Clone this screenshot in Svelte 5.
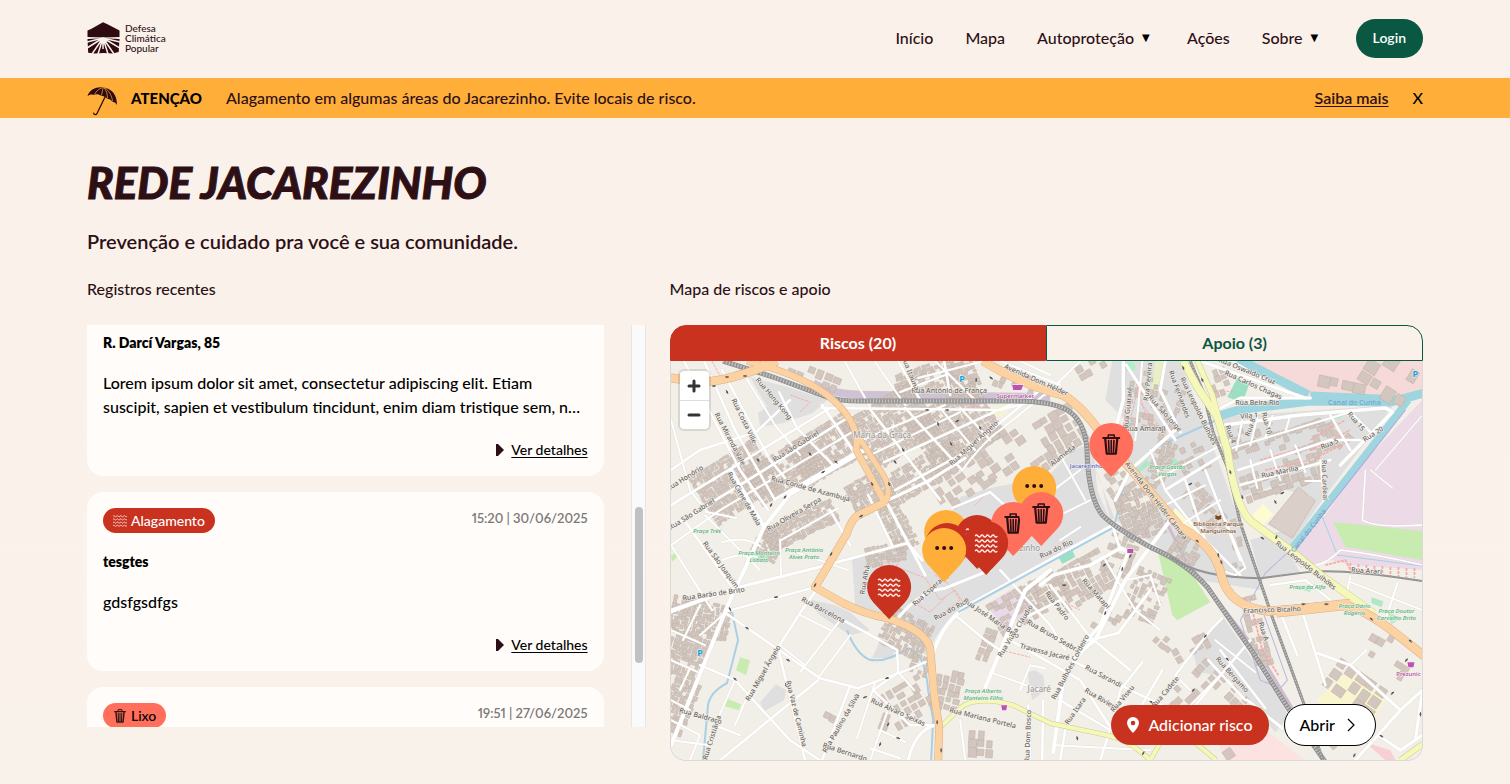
<script>
  import { onMount } from 'svelte';

  const navItems = [
    { label: 'Início', menu: false },
    { label: 'Mapa', menu: false },
    { label: 'Autoproteção', menu: true },
    { label: 'Ações', menu: false },
    { label: 'Sobre', menu: true }
  ];

  const lorem =
    'Lorem ipsum dolor sit amet, consectetur adipiscing elit. Etiam suscipit, sapien et vestibulum tincidunt, enim diam tristique sem, nec porttitor nibh lectus vitae mauris. Donec sit amet justo at magna.';

  const reports = [
    { kind: 'flood', tag: 'Alagamento', time: '10:12 | 02/07/2025', place: 'R. Esperança, 12', text: 'Rua alagada' },
    { kind: 'trash', tag: 'Lixo', time: '09:40 | 01/07/2025', place: 'R. Darcí Vargas, 85', text: lorem },
    { kind: 'flood', tag: 'Alagamento', time: '15:20 | 30/06/2025', place: 'tesgtes', text: 'gdsfgsdfgs' },
    { kind: 'trash', tag: 'Lixo', time: '19:51 | 27/06/2025', place: 'R. do Rio, 40', text: lorem }
  ];
  // The list shows the most recent entry first.
  const entries = [reports[0], reports[1], reports[1], reports[2], reports[3]];

  let list;
  let thumbTop = $state(45);
  let thumbSize = $state(39);

  function syncThumb() {
    thumbTop = (list.scrollTop / list.scrollHeight) * 100;
    thumbSize = (list.clientHeight / list.scrollHeight) * 100;
  }

  onMount(() => {
    list.scrollTop = list.children[3].offsetTop - list.offsetTop - 167;
    syncThumb();
  });

  // Small deterministic generator so that the blocks are always drawn alike.
  let seed = 7;
  const rnd = () => {
    seed = (seed * 16807) % 2147483647;
    return seed / 2147483647;
  };

  // [centre x, centre y, width, height, angle, cell, share of cells drawn]
  const clusters = [
    [890, 428, 84, 60, -32, 4, 0.95], [955, 428, 80, 64, -32, 4, 0.95], [925, 470, 80, 30, -30, 4, 0.9],
    [825, 450, 66, 48, -30, 4, 0.95], [785, 470, 76, 40, -30, 4, 0.9], [735, 482, 76, 56, -32, 4, 0.95],
    [800, 525, 76, 22, -26, 4, 0.95], [870, 492, 44, 34, -28, 4, 0.95], [895, 525, 22, 56, -28, 4, 0.95],
    [767, 545, 26, 26, -60, 4, 0.9], [885, 553, 40, 18, -12, 4, 0.9], [700, 618, 60, 36, 12, 4, 0.95],
    [685, 655, 38, 44, 18, 4, 0.95], [678, 705, 26, 54, 22, 4, 0.95], [905, 632, 46, 38, 28, 4, 0.9],
    [920, 665, 20, 20, 20, 5, 0.8], [905, 700, 44, 34, -30, 8, 0.8], [945, 688, 22, 40, 14, 7, 0.9],
    [925, 378, 64, 26, -20, 4, 0.9], [960, 376, 30, 28, -20, 4, 0.9], [810, 372, 60, 12, 22, 9, 0.5],
    [1015, 380, 40, 20, 24, 6, 0.7], [995, 455, 60, 40, -34, 9, 0.5], [960, 480, 60, 30, -34, 9, 0.65],
    [1060, 430, 44, 40, -30, 9, 0.7], [1045, 465, 40, 20, -34, 8, 0.5], [1137, 515, 36, 50, -20, 5, 0.9],
    [1115, 485, 22, 30, -34, 7, 0.7], [1080, 580, 56, 40, -30, 6, 0.8], [1120, 555, 30, 40, 20, 6, 0.6],
    [1015, 608, 50, 34, -30, 6, 0.75], [1045, 590, 40, 30, -30, 6, 0.7], [1145, 595, 34, 50, 24, 5, 0.6],
    [1110, 620, 30, 30, 28, 6, 0.5], [1188, 545, 30, 26, 30, 5, 0.8], [1205, 505, 46, 20, 50, 6, 0.7],
    [1233, 545, 16, 50, -18, 6, 0.5], [1160, 465, 20, 50, 20, 5, 0.75], [1190, 460, 36, 30, -24, 6, 0.55],
    [1245, 440, 50, 26, -20, 7, 0.6], [1300, 440, 60, 30, -18, 7, 0.5], [1280, 475, 80, 22, -18, 7, 0.65],
    [1330, 430, 40, 20, 40, 7, 0.6], [1140, 400, 26, 60, 8, 6, 0.5], [1165, 410, 20, 50, 20, 6, 0.5],
    [1215, 385, 26, 30, -20, 7, 0.5], [1330, 375, 70, 20, 12, 12, 0.55], [1390, 372, 50, 30, 32, 14, 0.6],
    [1255, 630, 16, 70, -14, 6, 0.7], [1220, 685, 60, 20, 44, 8, 0.6], [1182, 695, 36, 22, -45, 8, 0.5],
    [1355, 688, 60, 34, 35, 12, 0.7], [1225, 745, 70, 20, -35, 14, 0.5], [980, 740, 24, 20, 4, 9, 0.8],
    [875, 710, 20, 20, 20, 9, 0.6], [830, 717, 14, 7, 24, 7, 1], [1400, 670, 16, 14, 30, 8, 0.9],
    [1085, 370, 50, 14, -30, 8, 0.35], [985, 642, 8, 30, 20, 7, 1], [1190, 645, 40, 10, -30, 8, 0.6],
    [1165, 640, 20, 8, 40, 7, 0.9], [1330, 735, 16, 20, -40, 6, 0.8], [1375, 640, 30, 26, 30, 8, 0.3]
  ];

  const buildings = clusters.flatMap(([cx, cy, w, h, angle, cell, share]) => {
    const out = [];
    for (let x = -w / 2; x < w / 2; x += cell) {
      for (let y = -h / 2; y < h / 2; y += cell) {
        if (rnd() > share) continue;
        out.push({
          x: cx + x + rnd(),
          y: cy + y + rnd(),
          w: cell * (0.6 + rnd() * 0.4),
          h: cell * (0.6 + rnd() * 0.45),
          t: `rotate(${angle} ${cx} ${cy})`
        });
      }
    }
    return out;
  });

  const greyAreas = [
    '750,377 787,387 827,400 813,413 783,423 760,427 758,413 767,407',
    '960,497 990,488 1047,477 1073,450 1093,443 1097,490 1112,525 1060,557 960,610 940,630 925,655 905,628 880,612 855,606 852,560 907,543 922,562 935,540',
    '1112,361 1180,361 1225,480 1245,540 1262,590 1200,580 1165,555 1150,530 1175,515 1125,470 1125,420 1105,400',
    '1089,455 1115,520 1160,548 1190,568 1172,520 1150,505 1110,520 1100,480',
    '1217,417 1393,405 1322,500 1287,550 1300,573 1260,577 1250,540 1285,530 1310,495 1270,487 1240,497',
    '1193,653 1223,617 1280,700 1288,716 1275,732 1227,677 1198,672',
    '805,598 835,605 850,612 870,630 850,635 820,615',
    '760,702 776,684 786,690 784,700 764,711',
    '872,658 880,640 895,643 893,658',
    '1027,672 1035,670 1043,675 1045,690 1032,700'
  ];

  const orange = [
    ['M671 378 L703 382 Q735 380 777 361', 8],
    ['M747 361 Q815 378 840 407 Q860 428 856 450 L885 503', 6],
    ['M856 433 L880 470 Q893 488 885 503', 5],
    ['M885 502 L858 515 Q851 520 847 533 L827 567 L815 587 L843 603 Q865 614 887 618 Q925 630 930 648 L934 695 L939 727 L938 762', 7],
    ['M983 361 Q1020 384 1063 395 Q1085 408 1107 443 L1123 460 L1157 500 L1180 527 Q1215 546 1221 575 Q1228 606 1267 611 L1340 605 Q1362 606 1400 637 L1424 656', 8],
    ['M1276 612 L1350 604', 10]
  ];

  const yellow = [
    ['M1183 361 L1197 387 L1217 417 L1227 450 Q1236 512 1253 523 L1290 550 L1323 577 L1373 613', 7],
    ['M1197 361 L1212 395 L1226 445', 5],
    ['M940 727 L960 708 Q975 695 1013 705 L1050 723 L1107 735 Q1130 740 1150 760', 4],
    ['M1150 760 L1168 728 M1186 735 L1216 760', 4],
    ['M1400 760 L1422 744', 5]
  ];

  const streets = [
    ['M684 361 L740 470 L768 510', 2.5], ['M704 361 L735 430 L775 500', 2.5], ['M722 370 L770 460 L785 478', 2.5],
    ['M671 505 L830 408', 2.5], ['M671 470 L700 450 L756 432 L790 400', 2.5], ['M671 527 L735 488 L852 415', 2.5],
    ['M671 545 L720 510 L852 432', 2], ['M671 420 L690 490 L707 512 L736 518', 2], ['M745 376 L775 425 L800 455', 2],
    ['M779 392 L797 428 L833 465', 2.5], ['M731 470 L764 527 L727 607 L671 745', 4], ['M764 527 L790 494 L868 448', 4],
    ['M775 499 L860 450', 2.5], ['M822 405 L880 490 L925 575', 3], ['M822 408 L1000 410 L1030 402', 2.5],
    ['M869 408 L940 500', 2.5], ['M905 408 L962 470', 2.5], ['M884 462 L1020 400', 2.5], ['M895 490 L960 455 L1040 390', 2.5],
    ['M862 440 L945 405', 2], ['M870 455 L960 412', 2], ['M940 408 L975 450 M960 408 L990 440', 2],
    ['M886 501 L930 480 L965 458', 3], ['M845 362 L870 407 M875 362 L905 405', 2], ['M898 361 L920 400 M944 361 L950 395', 2.5],
    ['M918 378 L980 362 M900 392 L945 375 M935 361 L975 400', 2], ['M1000 361 L1060 385 M1020 361 L1050 375', 2],
    ['M671 610 L735 588 L815 568 L907 543 L922 560', 3], ['M727 611 L815 587', 2.5], ['M671 612 L725 592', 2.5],
    ['M671 545 L712 610', 2], ['M684 520 L731 586', 2.5], ['M705 515 L760 570', 2], ['M722 542 Q745 535 760 546 M722 560 Q740 552 757 557', 2],
    ['M780 540 L781 575 M781 540 L838 508', 2], ['M790 550 L848 570', 2], ['M830 510 L850 545 M868 495 L892 545', 2.5],
    ['M816 590 L795 620 M727 614 L820 678 L858 688 L912 668 L925 662', 2.5], ['M775 652 L802 610', 2.5],
    ['M779 652 L805 760', 2.5], ['M700 665 L735 680 L790 740 L820 760', 2.5], ['M735 680 L715 725 L740 735', 2], ['M750 690 L735 725', 2],
    ['M818 680 L720 760', 2.5], ['M818 678 L850 635 M800 672 L840 620', 2], ['M780 645 L805 665 M800 615 L830 630', 2],
    ['M850 685 L822 760', 2.5], ['M875 682 L857 738', 2], ['M843 620 Q880 640 897 650 L898 672 L873 690 L910 725 L938 725', 2.5],
    ['M887 712 L870 760 M880 730 L905 742 M870 748 L900 758', 2], ['M935 725 Q915 730 908 760', 3], ['M898 672 L914 690', 2],
    ['M898 618 Q920 590 945 588 L990 570', 3], ['M931 660 Q940 625 965 607 L1110 527', 4],
    ['M962 470 Q985 440 1000 430 L1060 382', 2], ['M952 508 L990 492 L1010 510 L1040 540', 2.5], ['M1040 500 L1080 470 M1050 520 L1090 500 M1060 540 L1080 527', 2],
    ['M1060 455 L1085 500', 2], ['M955 615 L985 640 L1000 650', 2.5], ['M984 690 L1025 590 L1050 570', 4], ['M1000 650 L1020 620 L1060 600', 2.5],
    ['M1000 570 L1050 625 L1065 650', 2.5], ['M1050 585 L1090 637 L1130 670', 2.5], ['M1010 640 L1080 680 L1112 730', 2.5],
    ['M990 672 L1040 690 M1020 690 L1030 665 L1045 668', 2], ['M1053 752 L1063 680 Q1073 655 1095 640 L1125 580 L1170 520', 4],
    ['M1040 585 L1053 575 L1090 565 L1120 548 L1128 552 L1100 625 L1085 642', 3.5], ['M1112 525 L1120 550', 3],
    ['M1105 560 L1135 610 L1160 630', 2], ['M1125 580 L1150 575 L1160 605', 2], ['M1090 640 L1118 633 L1150 590', 3],
    ['M1075 662 L1130 690 L1185 716', 2.5], ['M1060 700 L1110 730 L1120 690 L1142 662', 2.5], ['M1130 725 L1162 670', 2.5],
    ['M1175 675 L1210 630 L1222 618', 2.5], ['M1175 675 L1190 690', 2], ['M1195 705 L1250 640 M1208 660 L1245 700 M1220 650 L1265 708', 2.5],
    ['M1215 640 L1255 672 M1190 705 L1220 675', 2], ['M1247 700 L1282 728', 3], ['M1055 745 L1150 750', 2],
    ['M1109 732 L1100 760 M1060 760 L1065 730', 2.5], ['M1042 760 L1043 700 M1028 705 L1030 760', 2.5], ['M965 760 L960 720', 2],
    ['M1080 361 L1045 395', 2], ['M1123 361 L1123 400 L1115 430', 3.5], ['M1126 365 L1175 440', 3], ['M1165 361 L1160 390 L1180 432', 3],
    ['M1142 361 L1135 440', 2], ['M1175 430 L1130 470 L1115 500', 3.5], ['M1165 490 L1222 455', 3], ['M1165 490 L1200 535 L1240 575', 2.5],
    ['M1150 450 L1165 490 M1155 480 L1230 440', 2], ['M1185 480 L1205 540 M1205 470 L1240 560', 2.5], ['M1165 505 L1205 485 M1180 525 L1220 500', 2],
    ['M1220 570 L1235 575 L1245 568 L1225 520', 2], ['M1200 361 L1305 398', 3], ['M1215 411 L1240 398 L1310 398', 3], ['M1232 361 L1265 380', 2],
    ['M1225 425 L1300 415 L1385 408 L1392 412 L1340 465', 3.5], ['M1232 448 L1350 412', 2], ['M1238 470 L1330 440 L1360 440', 2.5],
    ['M1240 485 L1330 460', 2.5], ['M1242 420 L1236 450 M1257 417 L1250 445 M1272 416 L1265 438 M1290 415 L1285 432', 2],
    ['M1330 415 L1350 450 M1350 412 L1370 432', 2.5], ['M1270 450 L1280 480 M1295 445 L1305 472 M1250 460 L1257 488', 2],
    ['M1320 460 L1323 495 M1305 481 L1323 481', 2], ['M1365 470 L1362 520 Q1375 528 1422 525', 1.5], ['M1370 470 L1392 488 M1422 415 L1375 470', 1.2],
    ['M1300 565 Q1320 570 1340 550 Q1380 555 1422 565', 1.5], ['M1270 585 L1305 580 L1330 600', 2.5], ['M1350 576 L1345 600 M1350 582 L1422 610', 2],
    ['M1397 583 L1385 620', 2], ['M1280 612 L1297 655 M1302 612 L1325 685', 2.5], ['M1317 653 L1350 665 L1400 710 L1355 760', 3],
    ['M1350 665 L1366 650', 2], ['M1400 710 L1422 690 M1378 735 L1400 750 L1422 735', 3], ['M1422 690 L1415 740', 3],
    ['M683 640 L700 605 M671 630 L705 645 M671 660 L698 672 M680 690 L690 668', 2], ['M671 720 L700 735 M671 740 L710 745 M690 760 L700 735', 2],
    ['M700 635 L728 610 M671 700 L690 710', 2]
  ];

  const rails = [
    ['M723 361 L773 377 L827 397 Q840 401 860 401 L1013 401 Q1055 401 1070 412 Q1087 425 1087 457 Q1089 498 1102 515 Q1115 528 1150 547 Q1185 562 1207 587 L1253 653 L1287 707 L1325 762', 5],
    ['M1190 361 L1203 393 L1213 433 L1227 467 L1240 523 L1257 573 L1273 620 L1307 713 L1323 762', 3],
    ['M1170 557 Q1200 578 1260 578 L1307 572 Q1340 568 1422 581', 2]
  ];

  const labels = [
    ['Rua Hong Kong', 772, 400, 50], ['Rua Costa Ville', 742, 422, 64],
    ['Rua Miranda Vale', 728, 440, 62], ['Rua Honório', 686, 480, -32], ['Rua São Gabriel', 693, 516, -32], ['Rua São Gabriel', 797, 448, -32],
    ['Rua Cirne de Maia', 742, 500, 60], ['Rua São Joaquim', 719, 566, 54], ['Rua Barão de Brito', 714, 596, -8], ['Rua Oliveira Serpa', 795, 516, -30],
    ['Rua Conde de Azambuja', 810, 491, 15], ['Rua Antônio de França', 949, 393, 0], ['Rua Miguel Ângelo', 975, 445, -42], ['Rua Miguel Ângelo', 765, 674, -60],
    ['Rua Itaúna', 908, 374, 68], ['Avenida Dom Hélder', 1035, 382, 24], ['Avenida Dom Hélder Câmara', 1154, 502, 52],
    ['Rua Álvaro Seixas', 897, 714, 24], ['Rua Paulino da Silva', 843, 724, -60], ['Rua Vaz de Caminha', 794, 714, 76], ['Rua Barcelona', 822, 612, 28],
    ['Rua Esperança', 933, 590, -42], ['Rua Alhá', 867, 580, -80], ['Rua do Rio', 1057, 551, -25], ['Rua do Rio', 951, 612, -28], ['Rua José Maria Belo', 990, 620, 34],
    ['Rua Viúva Cláudio', 1017, 632, -58], ['Rua Mariana Portela', 982, 720, 14], ['Rua Bernardo', 844, 754, 18], ['Rua Cristiânia', 714, 738, -72],
    ['Rua Baldraco', 700, 718, 16], ['Rua Bruno Seabra', 1052, 638, 30], ['Travessa Jacaré', 1044, 654, 14], ['Rua Sarandi', 1102, 678, 28],
    ['Rua Riviera', 1100, 701, 30], ['Rua Matapi', 1094, 595, 48], ['Rua Padro', 1055, 607, 52],
    ['Rua Bérgamo', 1230, 676, 48], ['Rua Bulhões Cordeiro', 1072, 668, -62], ['Rua Cadete', 1167, 693, -50], ['Rua Viseu', 1124, 700, -50], ['Rua Isara', 1077, 712, -55],
    ['Rua Amaraji', 1145, 431, 0], ['Rua Guararé', 1130, 408, -84], ['Rua Pereira', 1150, 382, -84], ['Rua Fernandes', 1177, 395, 70],
    ['Rua São Jorge', 1163, 415, 48], ['Rua Leopoldo Bulhões', 1196, 412, 64], ['Rua Leopoldo Bulhões', 1304, 567, 38], ['Rua Oswaldo Cruz', 1246, 373, 22],
    ['Rua Carlos Chagas', 1252, 387, 24], ['Rua Beira Rio', 1257, 405, 0], ['Vila 1', 1249, 418, -4],
    ['Rua 10', 1264, 424, 75], ['Rua 8', 1252, 428, -70], ['Rua 4', 1228, 435, 70], ['Rua 15', 1354, 423, 50], ['Rua 20', 1374, 436, -32], ['Rua 5', 1330, 446, -22],
    ['Rua Marília', 1280, 474, -12], ['Rua Arari', 1366, 573, 4], ['Rua Cardeal', 1322, 480, 88], ['Francisco Bicalho', 1272, 612, -2],
    ['Rua A', 1261, 632, 72], ['Rua Dom Bosco', 1030, 736, -88], ['Alameda', 1064, 457, -38]
  ];

  const parks = [
    ['Praça Três', 707, 533], ['Praça Monteiro', 759, 555], ['Lobato', 759, 562], ['Praça Antônio', 804, 552], ['Alves Prato', 804, 559],
    ['Praça Alberto', 983, 693], ['Monteiro Filho', 983, 700], ['Praça Gastão', 1167, 469], ['Vargas', 1167, 476], ['Praça da Alfa', 1307, 589],
    ['Praça Dário', 1354, 608], ['Rogério', 1354, 615], ['Praça Doutor', 1396, 613], ['Carvalho Brito', 1396, 620]
  ];

  // One-way arrows drawn as short dark ticks.
  const ticks = [
    [714, 386, 0], [727, 377, 0], [745, 376, 0], [727, 392, 60], [810, 454, 50], [836, 462, 40], [823, 472, -30], [785, 497, -50], [771, 505, -60], [758, 460, 50],
    [872, 484, 60], [889, 484, 70], [861, 516, -30], [831, 554, -60], [815, 585, -60], [776, 597, -8], [730, 609, 60], [747, 628, 34], [735, 679, 40],
    [788, 660, 30], [786, 685, 70], [855, 696, -70], [865, 697, -20], [887, 678, -10], [888, 724, -60], [898, 738, 15], [880, 744, -70], [937, 722, 90], [941, 750, 90],
    [1064, 585, 0], [1104, 565, -40], [1122, 569, -80], [1130, 556, -60], [1105, 613, -70], [1190, 484, -30], [1197, 541, 40], [1218, 555, 80], [1221, 562, 70],
    [1230, 472, 70], [1242, 497, 70], [1262, 538, 35], [1330, 583, 35], [1303, 604, 0], [1326, 604, 0], [1371, 619, 40], [1410, 641, 40], [1183, 368, 70],
    [1202, 380, 60], [1282, 493, -30], [1275, 502, 60], [1276, 537, -70], [1193, 690, -50], [1205, 636, -50], [1227, 659, 40], [1059, 690, 90], [1077, 738, 80],
    [1151, 702, 40], [1143, 753, -60], [1406, 660, -50], [1392, 693, -40], [1420, 714, 90], [1381, 736, 30], [1354, 755, -60],
    [927, 410, 0], [947, 410, 0], [938, 424, 70], [951, 444, 60], [976, 380, 90], [991, 378, 40], [895, 462, 50], [903, 450, 60], [957, 421, -30], [980, 428, 60]
  ];

  const pins = [
    ['dots', 924, 510], ['flood', 925, 523], ['dots', 1012, 466], ['flood', 955, 515], ['trash', 991, 502], ['trash', 1019, 492],
    ['flood', 964, 521], ['dots', 922, 528], ['trash', 1089, 423], ['flood', 867, 565]
  ];
</script>

{#snippet waves()}
  {#each [1, 6, 11, 16] as y}
    <path
      d="M0 {y + 1}q1.400-2 2.750 0t2.750 0 2.750 0 2.750 0 2.750 0 2.750 0 2.750 0 2.750 0"
      fill="none"
      stroke="currentColor"
      stroke-width="1.500"
    />
  {/each}
{/snippet}

{#snippet bin()}
  <g fill="none" stroke="currentColor" stroke-linecap="round" stroke-linejoin="round">
    <path d="M1 4h16" stroke-width="2" />
    <path d="M6 3.500V1h6v2.500" stroke-width="1.500" />
    <path d="M3 5l1.400 14.500h9.200l1.400-14.500" stroke-width="2.200" />
    <path d="M6.300 6.500l.5 11.500M9 6.500v11.500M11.700 6.500l-.5 11.500" stroke-width="1.600" />
  </g>
{/snippet}

<div class="page">
  <header class="topbar">
    <a class="brand" href="#inicio">
      <svg width="33" height="32" viewBox="0 0 33 32" aria-hidden="true">
        <path d="M.5 8.500L4 7 16 .3 20 2l12.500 6.500v6.500L17 15.500 .5 15z" fill="#2d0b10" />
        <path d="M.5 17l15.500-.8 16.500.8-.8 13-6 1.500-9-.5-9 .5-6.500-.7z" fill="#2d0b10" />
        <g stroke="#fbf1eb" stroke-width="1.500" fill="none">
          <path d="M16 16L0 20M16 16L0 26M16 16L5 32M16 16l-5 16M16 16v11M16 16l5 16M16 16l11 16M16 16l17 10M16 16l17 4" />
        </g>
        <path d="M11 17.500h11l-5.500 5z" fill="#fbf1eb" />
      </svg>
      <span>Defesa<br />Climática<br />Popular</span>
    </a>
    <nav>
      {#each navItems as item}
        {#if item.menu}
          <button class="nav-item" type="button">{item.label}<span class="caret" aria-hidden="true">▼</span></button>
        {:else}
          <a class="nav-item" href="#{item.label}">{item.label}</a>
        {/if}
      {/each}
      <button class="login" type="button">Login</button>
    </nav>
  </header>

  <div class="alert" role="status">
    <svg width="32" height="32" viewBox="0 0 32 32" aria-hidden="true">
      <path
        d="M.5 11C3 4 10 1.500 16 2.500c8 1 14 6 14 17.500-1.500-2.500-3-3.500-4.500-3-1-2-3-3.500-5-3-1.500-2-4-3.500-6-3C12 9 9 8.500 7.500 10 5 9 2.500 9.500.5 11z"
        fill="#2d0b10"
      />
      <path d="M18 12L10 28.500c-.8 1.600-3 1.500-3.300-.3" fill="none" stroke="#2d0b10" stroke-width="1.300" stroke-linecap="round" />
      <path
        d="M7.500 10C9 6 12 3.500 15.500 2.700M14.500 10.500C15 7 16 4 16.300 2.700M20.500 13.500c0-5-1.500-8.500-3.500-10.700M25.500 16.500C25 10 21 5 18 3"
        fill="none"
        stroke="#ffae3a"
        stroke-width=".7"
      />
    </svg>
    <strong>ATENÇÃO</strong>
    <p>Alagamento em algumas áreas do Jacarezinho. Evite locais de risco.</p>
    <a href="#saiba-mais">Saiba mais</a>
    <button type="button" aria-label="Fechar aviso">X</button>
  </div>

  <main>
    <h1>REDE JACAREZINHO</h1>
    <p class="lead">Prevenção e cuidado pra você e sua comunidade.</p>

    <div class="columns">
      <section>
        <h2>Registros recentes</h2>
        <div class="feed">
          <div class="list" bind:this={list} onscroll={syncThumb}>
            {#each entries as entry}
              <article>
                <div class="meta">
                  <span class="tag {entry.kind}">
                    {#if entry.kind === 'flood'}
                      <svg width="14" height="12" viewBox="0 0 22 19" opacity=".8" aria-hidden="true">{@render waves()}</svg>
                    {:else}
                      <svg width="14" height="14" viewBox="0 0 18 21" opacity=".8" aria-hidden="true">{@render bin()}</svg>
                    {/if}
                    {entry.tag}
                  </span>
                  <time>{entry.time}</time>
                </div>
                <h3>{entry.place}</h3>
                <p>{entry.text}</p>
                <div class="more">
                  <svg width="8" height="12" viewBox="0 0 8 12" aria-hidden="true"><path d="M0 0h2l6 6-6 6H0z" fill="#2d1015" /></svg>
                  <a href="#detalhes">Ver detalhes</a>
                </div>
              </article>
            {/each}
          </div>
          <div class="track" aria-hidden="true">
            <div class="thumb" style="top: {thumbTop}%; height: {thumbSize}%"></div>
          </div>
        </div>
      </section>

      <section>
        <h2>Mapa de riscos e apoio</h2>
        <div class="tabs" role="tablist">
          <button type="button" role="tab" aria-selected="true">Riscos (20)</button>
          <button type="button" role="tab" aria-selected="false">Apoio (3)</button>
        </div>
        <div class="map">
          <svg class="canvas" viewBox="671 361 751 399" preserveAspectRatio="xMinYMin slice" aria-hidden="true">
            <rect x="671" y="361" width="751" height="399" fill="#f2efe9" />
            {#each greyAreas as points}
              <polygon {points} fill="#dfdfdf" />
            {/each}
            <polygon points="1250,361 1422,361 1422,390 1400,397 1310,396" fill="#f6d9d9" />
            <polygon points="1422,400 1422,570 1350,565 1330,560 1300,568 1287,552 1325,515 1360,465" fill="#ecdbe7" />
            <polygon points="1218,745 1260,726 1305,760 1224,760" fill="#fde2e2" />
            <polygon points="1365,742 1390,750 1395,760 1385,760" fill="#f6d0d4" />
            <polygon points="985,605 1010,590 1025,598 1030,612 1005,627" fill="#ead9e8" />
            <polygon points="1333,522 1422,531 1422,560 1345,547" fill="#c8ebb0" />
            <polygon points="1158,553 1187,567 1210,602 1177,620 1172,615" fill="#c8ebb0" />
            <polygon points="740,657 750,660 746,675 736,670" fill="#c8ebb0" />
            <polygon points="726,698 741,704 739,710 725,706" fill="#c8ebb0" />
            <polygon points="671,556 677,551 678,556 672,562" fill="#c8ebb0" />
            <polygon points="1175,508 1206,540 1202,545 1172,512" fill="#fbf8d4" />
            <polygon points="1252,515 1263,504 1273,514 1260,528" fill="#fdfbd0" />
            <polygon points="1316,700 1348,670 1385,700 1360,740" fill="#f8f5cf" />
            <polygon points="1155,361 1163,361 1157,395 1150,393" fill="#eaf0c4" />
            <polygon points="978,410 1005,405 1007,412 995,418 992,412" fill="#f6f6cc" />
            <polygon points="1237,378 1249,384 1242,403 1227,397" fill="#9ce0c4" />
            <polygon points="1058,557 1072,550 1075,557 1062,564" fill="#9ce0c4" />
            <circle cx="1130" cy="367" r="5" fill="#aef0c8" />
            <path d="M1167 465l8-7 6 8-8 5zM1136 470l10-10 4 4-10 8zM1371 597l12 4-2 6-10-4zM752 552l18 2-4 9-14-3z" fill="#aee8c8" />
            <path d="M1295 587l20-3-6 8zM1385 610l16 8-10 6zM1335 417l8-2-4 5z" fill="#b4eecb" />
            <polygon points="1298,487 1315,501 1292,538 1268,524" fill="#dbd0c9" stroke="#c4b6ab" stroke-width=".7" />

            <g fill="none" stroke="#9fd5df">
              <path d="M1238 359 L1308 395" stroke-width="9" />
              <path d="M1216 418 Q1230 410 1260 407 L1310 401 L1390 402 L1424 393" stroke-width="9" />
              <path d="M1310 396 L1400 400" stroke-width="9" />
              <path d="M1408 400 L1320 512 L1290 550" stroke-width="7" />
            </g>
            <g fill="none" stroke="#a9cfe6" stroke-width="2">
              <path d="M847 630 Q855 652 868 659 Q885 664 908 648 Q925 652 928 690 L933 720 L931 760" />
              <path d="M732 612 L738 640 L727 683 Q710 692 708 705 L703 760" />
              <path d="M1216 420 L1150 450 L1125 480 L1115 522" />
              <path d="M1320 512 L1337 555 L1422 566" stroke-width="1" />
              <path d="M1290 550 L1265 573 L1240 620 L1260 680 L1280 688 L1287 680 L1262 610" stroke="#b9b6e0" stroke-width="1" />
              <path d="M1405 410 L1290 556" stroke="#a9a2dd" stroke-width="1" />
              <path d="M1197 375 L1222 435" stroke="#a9a2dd" stroke-width="1" />
            </g>
            <path d="M813 383 Q830 395 870 395 L1050 397" fill="none" stroke="#cfc2d2" stroke-width="8" />
            <path d="M1165 520 L1185 560 L1260 655 L1320 755" fill="none" stroke="#cdbccd" stroke-width="3" />

            <g fill="#d2c6be" stroke="#bdb0a7" stroke-width=".5">
              {#each buildings as b}
                <rect x={b.x} y={b.y} width={b.w} height={b.h} transform={b.t} />
              {/each}
            </g>
            <g fill="none" stroke="#f7a9a6" stroke-width=".9" stroke-dasharray="3 1">
              <path d="M880 560 L905 570 L925 578 L940 600 L955 590 L965 605 M910 600 L930 612 L945 598 M935 575 L950 585 L960 600 L935 620 M900 560 L890 575" />
              <path d="M712 361 L720 376 M790 395 L810 402 L800 412 M735 372 L760 362 M970 395 L985 392 M972 408 L985 402 M1005 651 L1030 657" />
              <path d="M1128 390 L1120 450 M1135 380 L1150 430 M1142 370 L1130 420 M1138 400 L1170 440 M1160 430 L1180 425 M1210 390 L1235 392" />
              <path d="M1260 460 L1330 440 M1265 470 L1310 460 M1310 440 L1345 420 M1310 450 L1350 430 M1315 458 L1355 438" stroke-width="1.500" />
              <path d="M1325 565 L1345 560 L1350 570 M1350 563 v10 M1358 564 v9 M1366 565 v10 M1374 566 v9 M1382 566 v10 M1390 567 v10 M1398 567 v10 M1406 568 v10 M1414 568 v10 M1252 610 L1262 650 L1278 675" stroke-width="1.800" />
              <path d="M975 505 L985 495 M1060 600 L1080 610" />
            </g>

            <g fill="none" stroke-linejoin="round" stroke-linecap="round">
              {#each streets as [d, w]}
                <path {d} stroke="#d8d3cc" stroke-width={w + 0.8} opacity=".5" />
              {/each}
              {#each streets as [d, w]}
                <path {d} stroke="#ffffff" stroke-width={w} />
              {/each}
            </g>
            <path d="M958 612 L1112 528" fill="none" stroke="#a9cfe6" stroke-width="2" />
            <g fill="none">
              {#each rails as [d, w]}
                <path {d} stroke="#8f8f8f" stroke-width={w} />
                <path {d} stroke="#c0c0c0" stroke-width={w - 1.6} stroke-dasharray="1.500 1.500" />
              {/each}
            </g>
            <g fill="none" stroke-linejoin="round">
              {#each yellow as [d, w]}
                <path {d} stroke="#c9cb92" stroke-width={w + 1} />
              {/each}
              {#each yellow as [d, w]}
                <path {d} stroke="#f5f8b9" stroke-width={w} />
              {/each}
              {#each orange as [d, w]}
                <path {d} stroke="#d9b083" stroke-width={w + 1} />
              {/each}
              {#each orange as [d, w]}
                <path {d} stroke="#fcd2a2" stroke-width={w} />
              {/each}
            </g>
            <g stroke="#555" stroke-width="1.100">
              {#each ticks as [x, y, a]}
                <path d="M{x - 2} {y}h4m-2-1v2" transform="rotate({a} {x} {y})" />
              {/each}
            </g>

            <g class="names">
              {#each labels as [name, x, y, a]}
                <text {x} {y} transform="rotate({a} {x} {y})">{name}</text>
              {/each}
              <g class="park">
                {#each parks as [name, x, y]}
                  <text {x} {y}>{name}</text>
                {/each}
              </g>
              <g class="district">
                <text x="882" y="438">Maria da Graça</text>
                <text x="1018" y="551">Jacarezinho</text>
                <text x="1039" y="692">Jacaré</text>
              </g>
              <g class="water">
                <text x="1354" y="405">Canal do Cunha</text>
                <text x="1310" y="532" transform="rotate(-52 1310 532)">Canal do Cunha</text>
              </g>
              <g class="shop">
                <text x="1015" y="398">Supermarket</text>
                <text x="1408" y="676">Prezunic</text>
              </g>
              <g class="culture">
                <text x="1218" y="526">Biblioteca Parque</text>
                <text x="1218" y="533">Manguinhos</text>
                <path d="M1215 515l3 1 3-1v4l-3 1-3-1z" />
              </g>
              <g class="station"><text x="1086" y="468">Jacarezinho</text></g>
              <g class="parking">
                <text x="962" y="382">P</text>
                <text x="1415" y="377">P</text>
                <text x="700" y="656">P</text>
              </g>
              <path d="M1012 385h11l-2 5h-8zM1001 705h6l-1 5h-4zM1407 662h7l-1 5h-5zM1127 549h6v4h-6z" fill="#bf4fb4" />
            </g>

            {#each pins as [kind, x, y]}
              <g class="pin {kind}" transform="translate({x} {y})">
                <path d="M22 54L6.500 37.500A22 22 0 1 1 37.500 37.500z" fill="currentColor" />
                {#if kind === 'flood'}
                  <g transform="translate(11 13)" color="#ffe9e4">{@render waves()}</g>
                {:else if kind === 'trash'}
                  <g transform="translate(13 11)" color="#2d1015">{@render bin()}</g>
                {:else}
                  <g fill="#2d1015">
                    <circle cx="15" cy="20" r="2" />
                    <circle cx="22" cy="20" r="2" />
                    <circle cx="29" cy="20" r="2" />
                  </g>
                {/if}
              </g>
            {/each}
          </svg>

          <div class="zoom">
            <button type="button" aria-label="Aproximar">
              <svg width="14" height="14" viewBox="0 0 14 14" aria-hidden="true"><path d="M7 2v10M2 7h10" /></svg>
            </button>
            <button type="button" aria-label="Afastar">
              <svg width="14" height="14" viewBox="0 0 14 14" aria-hidden="true"><path d="M2 7h10" /></svg>
            </button>
          </div>

          <div class="actions">
            <button class="add" type="button">
              <svg width="12" height="16" viewBox="0 0 12 16" aria-hidden="true">
                <path fill-rule="evenodd" d="M6 0a6 6 0 0 1 6 6c0 4-6 10-6 10S0 10 0 6a6 6 0 0 1 6-6zm0 3.700a2.300 2.300 0 1 0 0 4.600 2.300 2.300 0 0 0 0-4.600z" fill="currentColor" />
              </svg>
              Adicionar risco
            </button>
            <button class="open" type="button">
              Abrir
              <svg width="8" height="14" viewBox="0 0 8 14" aria-hidden="true"><path d="M1 1l6 6-6 6" fill="none" stroke="currentColor" stroke-width="1.200" /></svg>
            </button>
          </div>
        </div>
      </section>
    </div>
  </main>
</div>

<style>
  :global(body) {
    margin: 0;
  }
  .page {
    min-height: 100vh;
    box-sizing: border-box;
    padding-bottom: 23px;
    background: linear-gradient(#fbf1eb 40%, #f9f2ea);
    color: #2d1015;
    font-family: Lato, 'Open Sans', sans-serif;
    font-size: 16px;
    font-weight: 500;
    line-height: 24px;
  }
  button {
    margin: 0;
    padding: 0;
    border: 0;
    background: none;
    font: inherit;
    color: inherit;
    cursor: pointer;
  }
  h1, h2, h3, p {
    margin: 0;
  }
  .topbar, .alert, main {
    padding-inline: 87px;
  }
  .topbar {
    display: flex;
    align-items: center;
    justify-content: space-between;
    box-sizing: border-box;
    height: 78px;
    padding-bottom: 2px;
  }
  .brand {
    display: flex;
    align-items: center;
    gap: 5px;
    color: inherit;
    font-size: 10px;
    line-height: 10px;
    text-decoration: none;
  }
  nav {
    display: flex;
    align-items: center;
    gap: 32px;
  }
  .nav-item {
    display: flex;
    align-items: center;
    gap: 8px;
    color: inherit;
    text-decoration: none;
  }
  .caret {
    width: 13px;
    color: #000;
    font-family: 'DejaVu Sans', sans-serif;
    font-size: 10px;
    text-align: left;
  }
  .login {
    height: 39px;
    padding: 0 17px;
    border-radius: 20px;
    background: #0a5842;
    color: #fff;
    font-size: 14px;
    font-weight: 600;
  }
  .alert {
    display: flex;
    align-items: center;
    height: 40px;
    background: #ffae3a;
  }
  .alert svg {
    margin-top: 6px;
    margin-right: 12px;
  }
  .alert strong {
    margin-right: 24px;
    color: #000;
    font-size: 15px;
    font-weight: 900;
  }
  .alert p {
    flex: 1;
  }
  .alert a {
    margin-right: 24px;
    color: inherit;
    font-weight: 600;
    text-underline-offset: 2px;
  }
  .alert button {
    color: #000;
  }
  main {
    padding-top: 32px;
  }
  h1 {
    font-size: 44px;
    font-style: italic;
    font-weight: 900;
    line-height: 64px;
    -webkit-text-stroke: 1px currentColor;
  }
  .lead {
    margin-top: 12px;
    font-size: 20px;
    font-weight: 600;
    line-height: 30px;
  }
  .columns {
    display: grid;
    grid-template-columns: minmax(0, 43fr) minmax(0, 58fr);
    gap: 24px;
    margin-top: 21px;
  }
  h2 {
    margin-bottom: 24px;
    font-size: 16px;
    font-weight: 500;
  }
  .feed {
    display: flex;
    gap: 27px;
    height: 402px;
  }
  .list {
    display: flex;
    flex: 1;
    flex-direction: column;
    gap: 16px;
    overflow-y: auto;
    scrollbar-width: none;
  }
  .track {
    position: relative;
    width: 13px;
    border: solid #e6e6e6;
    border-width: 0 1px;
    background: #fafafa;
  }
  .thumb {
    position: absolute;
    left: 3px;
    width: 8px;
    border-radius: 4px;
    background: #c1c1c1;
  }
  article {
    flex: none;
    padding: 16px;
    border-radius: 16px;
    background: #fffcf9;
    color: #000;
  }
  .meta {
    display: flex;
    justify-content: space-between;
    height: 25px;
  }
  .tag {
    display: flex;
    align-items: center;
    gap: 4px;
    padding: 0 10px;
    border-radius: 13px;
    font-size: 14px;
  }
  .tag.flood {
    background: #c8321e;
    color: #fff;
  }
  .tag.trash {
    background: #ff6f5b;
    color: #000;
  }
  time {
    color: #7b7878;
    font-size: 13px;
    font-variant-numeric: proportional-nums;
    font-weight: 600;
    line-height: 21px;
  }
  h3 {
    margin-top: 18px;
    font-size: 14px;
    font-weight: 800;
    line-height: 21px;
  }
  article p {
    display: -webkit-box;
    margin-top: 18px;
    overflow: hidden;
    -webkit-box-orient: vertical;
    -webkit-line-clamp: 2;
    line-clamp: 2;
  }
  .more {
    display: flex;
    align-items: center;
    justify-content: flex-end;
    gap: 7px;
    margin-top: 20px;
    font-size: 14px;
    line-height: 21px;
  }
  .more a {
    color: inherit;
    text-underline-offset: 2px;
  }
  .tabs {
    display: grid;
    grid-template-columns: 1fr 1fr;
    height: 36px;
  }
  .tabs button {
    border: 1px solid #0a5842;
    border-radius: 0 16px 0 0;
    color: #0a5842;
    font-weight: 700;
  }
  .tabs button[aria-selected='true'] {
    border-color: #c8321e;
    border-radius: 16px 0 0;
    background: #c8321e;
    color: #fff;
  }
  .map {
    position: relative;
    height: 399px;
    overflow: hidden;
    border: solid #d9d9d9;
    border-width: 0 1px 1px;
    border-radius: 0 0 16px 16px;
  }
  .canvas {
    display: block;
    width: 100%;
    height: 100%;
  }
  .names {
    fill: #6a6560;
    stroke: #f6f3ee;
    stroke-width: 1px;
    paint-order: stroke;
    font-family: 'Noto Sans', sans-serif;
    font-size: 7px;
    text-anchor: middle;
  }
  .park {
    fill: #4db078;
    font-size: 6px;
    font-style: italic;
  }
  .district {
    fill: #9b9b9b;
    font-size: 8px;
  }
  .water {
    fill: #6fa6c9;
    stroke: none;
  }
  .shop {
    fill: #b344a8;
    font-size: 6px;
  }
  .culture {
    fill: #7c4a1c;
    font-size: 6px;
  }
  .station {
    fill: #5a5fc4;
    font-size: 6px;
  }
  .parking {
    fill: #1a9fd8;
    font-size: 9px;
    font-weight: 700;
  }
  .pin.flood {
    color: #c8321e;
  }
  .pin.trash {
    color: #ff6f5b;
  }
  .pin.dots {
    color: #ffae3a;
  }
  .zoom {
    position: absolute;
    top: 10px;
    left: 9px;
    display: grid;
    width: 29px;
    border-radius: 4px;
    background: #fff;
    box-shadow: 0 0 0 2px rgba(0, 0, 0, 0.1);
  }
  .zoom button {
    display: grid;
    place-items: center;
    height: 29px;
  }
  .zoom button + button {
    border-top: 1px solid #ddd;
  }
  .zoom path {
    fill: none;
    stroke: #333;
    stroke-linecap: round;
    stroke-width: 3;
  }
  .actions {
    position: absolute;
    right: 46px;
    bottom: 14px;
    display: flex;
    align-items: center;
    gap: 15px;
  }
  .actions button {
    display: flex;
    align-items: center;
    border-radius: 21px;
  }
  .add {
    gap: 9px;
    height: 40px;
    padding: 0 17px;
    background: #c8321e;
    color: #fff;
  }
  .actions .add {
    padding: 0 16px;
  }
  .actions .open {
    gap: 12px;
    box-sizing: border-box;
    height: 42px;
    padding: 0 20px 0 15px;
    border: 1px solid #000;
    background: #fff;
    color: #000;
  }
</style>
